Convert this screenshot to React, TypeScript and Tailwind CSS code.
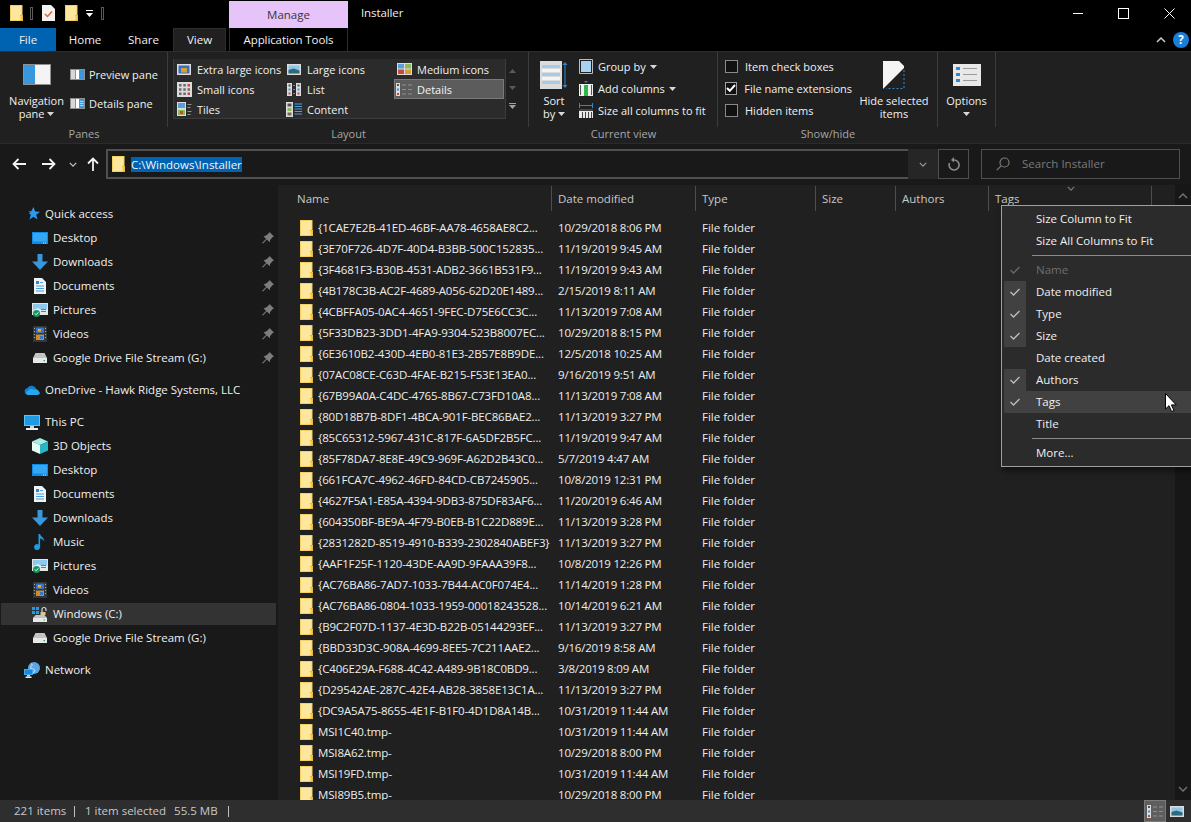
import React from "react";

const files: [string, string][] = [
  ["{1CAE7E2B-41ED-46BF-AA78-4658AE8C2...", "10/29/2018 8:06 PM"],
  ["{3E70F726-4D7F-40D4-B3BB-500C152835...", "11/19/2019 9:45 AM"],
  ["{3F4681F3-B30B-4531-ADB2-3661B531F9...", "11/19/2019 9:43 AM"],
  ["{4B178C3B-AC2F-4689-A056-62D20E1489...", "2/15/2019 8:11 AM"],
  ["{4CBFFA05-0AC4-4651-9FEC-D75E6CC3C...", "11/13/2019 7:08 AM"],
  ["{5F33DB23-3DD1-4FA9-9304-523B8007EC...", "10/29/2018 8:15 PM"],
  ["{6E3610B2-430D-4EB0-81E3-2B57E8B9DE...", "12/5/2018 10:25 AM"],
  ["{07AC08CE-C63D-4FAE-B215-F53E13EA0...", "9/16/2019 9:51 AM"],
  ["{67B99A0A-C4DC-4765-8B67-C73FD10A8...", "11/13/2019 7:08 AM"],
  ["{80D18B7B-8DF1-4BCA-901F-BEC86BAE2...", "11/13/2019 3:27 PM"],
  ["{85C65312-5967-431C-817F-6A5DF2B5FC...", "11/19/2019 9:47 AM"],
  ["{85F78DA7-8E8E-49C9-969F-A62D2B43C0...", "5/7/2019 4:47 AM"],
  ["{661FCA7C-4962-46FD-84CD-CB7245905...", "10/8/2019 12:31 PM"],
  ["{4627F5A1-E85A-4394-9DB3-875DF83AF6...", "11/20/2019 6:46 AM"],
  ["{604350BF-BE9A-4F79-B0EB-B1C22D889E...", "11/13/2019 3:28 PM"],
  ["{2831282D-8519-4910-B339-2302840ABEF3}", "11/13/2019 3:27 PM"],
  ["{AAF1F25F-1120-43DE-AA9D-9FAAA39F8...", "10/8/2019 12:26 PM"],
  ["{AC76BA86-7AD7-1033-7B44-AC0F074E4...", "11/14/2019 1:28 PM"],
  ["{AC76BA86-0804-1033-1959-00018243528...", "10/14/2019 6:21 AM"],
  ["{B9C2F07D-1137-4E3D-B22B-05144293EF...", "11/13/2019 3:27 PM"],
  ["{BBD33D3C-908A-4699-8EE5-7C211AAE2...", "9/16/2019 8:58 AM"],
  ["{C406E29A-F688-4C42-A489-9B18C0BD9...", "3/8/2019 8:09 AM"],
  ["{D29542AE-287C-42E4-AB28-3858E13C1A...", "11/13/2019 3:27 PM"],
  ["{DC9A5A75-8655-4E1F-B1F0-4D1D8A14B...", "10/31/2019 11:44 AM"],
  ["MSI1C40.tmp-", "10/31/2019 11:44 AM"],
  ["MSI8A62.tmp-", "10/29/2018 8:00 PM"],
  ["MSI19FD.tmp-", "10/31/2019 11:44 AM"],
  ["MSI89B5.tmp-", "10/29/2018 8:00 PM"],
];

function Folder({ className = "" }: { className?: string }) {
  return (
    <svg viewBox="0 0 13 16" className={`h-4 w-[13px] shrink-0 ${className}`}>
      <path d="M0 0h12.500v16H0z" fill="#f6cf62" />
      <path d="M1 1h10.500v14H1z" fill="#fde79d" />
      <path d="M10 10h3v6h-3z" fill="#e9b93e" />
      <path d="M10 11h1.500v4H10z" fill="#fcd96f" />
    </svg>
  );
}

function Caret({ className = "" }: { className?: string }) {
  return (
    <svg viewBox="0 0 7 4" className={`inline-block h-1 w-[7px] ${className}`}>
      <path d="M0 0h7L3.500 4z" fill="#d8d8d8" />
    </svg>
  );
}

function Chevron({ up, className = "" }: { up?: boolean; className?: string }) {
  return (
    <svg viewBox="0 0 10 6" className={className} fill="none" stroke="currentColor" strokeWidth="1.500">
      <path d={up ? "M1 5l4-4 4 4" : "M1 1l4 4 4-4"} />
    </svg>
  );
}

function Pin() {
  return (
    <svg viewBox="0 0 12 12" className="h-3 w-3 shrink-0">
      <path d="M7.500 0L12 4.500l-1.300.6-2.600 3-.3 2.200L4.900 7.400 1 11.500 0 11l4-4-2.500-2.900 2.300-.3 3-2.600z" fill="#7d7d7d" />
    </svg>
  );
}

function Desktop() {
  return (
    <svg viewBox="0 0 16 12" className="h-3 w-4 shrink-0">
      <path d="M0 0h16v12H0z" fill="#0f8ae6" />
      <path d="M1 1h14v8.500H1z" fill="#35a7f2" />
      <path d="M11 10.500h1v1h-1zM13 10.500h1v1h-1z" fill="#d8f0ff" />
    </svg>
  );
}

function Downloads() {
  return (
    <svg viewBox="0 0 16 16" className="h-4 w-4 shrink-0">
      <path d="M5.500 0h5v7.500H16L8 16 0 7.500h5.500z" fill="#3a96dd" />
    </svg>
  );
}

function Documents() {
  return (
    <svg viewBox="0 0 12 16" className="h-4 w-3 shrink-0">
      <path d="M0 0h8l4 4v12H0z" fill="#f2f2f2" />
      <path d="M2 3h3v3H2z" fill="#2b88d8" />
      <path d="M6 4h3v1H6zM2 7.500h8v1H2zM2 10h8v1H2zM2 12.500h8v1H2z" fill="#4a9fe0" />
    </svg>
  );
}

function Pictures() {
  return (
    <svg viewBox="0 0 16 16" className="h-4 w-4 shrink-0">
      <path d="M0 1h16v12H0z" fill="#e4e4e4" />
      <path d="M1 2h14v10H1z" fill="#8cc7ef" />
      <path d="M1 8l5-2 4 2 5-1v5H1z" fill="#dfe9ef" />
      <path d="M9 7h5v1H9zM9 9h5v1H9z" fill="#6a7a86" />
      <circle cx="4.500" cy="11.500" r="3.500" fill="#14985f" />
      <path d="M3 11.500l1.200 1.200L6.300 10.400" stroke="#e8fff4" fill="none" />
    </svg>
  );
}

function Videos() {
  return (
    <svg viewBox="0 0 14 16" className="h-4 w-[14px] shrink-0">
      <path d="M0 0h14v16H0z" fill="#33373b" />
      <path d="M3 1.500h8V7H3z" fill="#3c74c4" />
      <path d="M3 8.500h8V14H3z" fill="#d68a24" />
      <path d="M5 3h3v2.500H5z" fill="#e2b32c" />
      <path d="M7 10h3v3H7z" fill="#3c74c4" />
      <path d="M1 2h1v1H1zM1 5h1v1H1zM1 8h1v1H1zM1 11h1v1H1zM12 2h1v1h-1zM12 5h1v1h-1zM12 8h1v1h-1zM12 11h1v1h-1z" fill="#a9adb2" />
    </svg>
  );
}

function Drive() {
  return (
    <svg viewBox="0 0 14 10" className="h-[10px] w-[14px] shrink-0">
      <path d="M2.500 0h9L14 5H0z" fill="#c4c4c4" />
      <path d="M0 5h14v5H0z" fill="#e8e8e8" />
      <path d="M10.500 7h1.500v1.200h-1.500z" fill="#35a853" />
    </svg>
  );
}

function Row({ icon, label, pin, active, top }: { icon: React.ReactNode; label: string; pin?: boolean; active?: boolean; top?: boolean }) {
  return (
    <div className="flex h-6 items-center py-px pl-px pr-[2px]">
      <div className={`flex h-[22px] flex-1 items-center ${top ? "pl-[23px]" : "pl-[31px]"} ${active ? "bg-[#333333]" : ""}`}>
        <div className="mr-[5px] flex w-4 items-center justify-center">{icon}</div>
        <span className="flex-1 whitespace-nowrap">{label}</span>
        {pin && (
          <div className="mr-[2px]">
            <Pin />
          </div>
        )}
      </div>
    </div>
  );
}

function Sidebar() {
  return (
    <div className="w-[278px] shrink-0 bg-[#191919] pt-[17px] text-[#f0f0f0]">
      <Row
        top
        label="Quick access"
        icon={
          <svg viewBox="0 0 16 14" className="h-[14px] w-4">
            <path d="M9.500 0l1.600 4.500 4.900.2-3.800 3 1.300 4.800-4-2.700-4 2.700 1.300-4.800-2-1.600 1.600-.6L4 3.700l3.200.9z" fill="#2b9bf0" />
          </svg>
        }
      />
      <Row pin label="Desktop" icon={<Desktop />} />
      <Row pin label="Downloads" icon={<Downloads />} />
      <Row pin label="Documents" icon={<Documents />} />
      <Row pin label="Pictures" icon={<Pictures />} />
      <Row pin label="Videos" icon={<Videos />} />
      <Row pin label="Google Drive File Stream (G:)" icon={<Drive />} />
      <div className="h-2" />
      <Row
        top
        label="OneDrive - Hawk Ridge Systems, LLC"
        icon={
          <svg viewBox="0 0 16 10" className="h-[10px] w-4">
            <path d="M4 10a3.500 3.500 0 01-.6-6.900A5 5 0 0112.300 4 3.200 3.200 0 0113 10z" fill="#0f7fd8" />
            <path d="M4 10a2.200 2.200 0 01.4-4.300c1-2 3.400-2.400 5-.9C11.500 4 14.500 5 16 8c-.3 1.200-1.500 2-3 2z" fill="#28a8ea" />
          </svg>
        }
      />
      <div className="h-2" />
      <Row
        top
        label="This PC"
        icon={
          <svg viewBox="0 0 16 15" className="h-[15px] w-4">
            <path d="M0 0h16v11H0z" fill="#5cc4f5" />
            <path d="M1 1h14v9H1z" fill="#1f9be6" />
            <path d="M6 11h4v2H6z" fill="#c8d4dc" />
            <path d="M2 13h12v2H2z" fill="#e8eef2" />
          </svg>
        }
      />
      <Row
        label="3D Objects"
        icon={
          <svg viewBox="0 0 16 16" className="h-4 w-4">
            <path d="M8 0l8 3.500L8 7 0 3.500z" fill="#a4eee8" />
            <path d="M0 3.500L8 7v9l-8-3.500z" fill="#e4fbf8" />
            <path d="M16 3.500L8 7v9l8-3.500z" fill="#28b6c4" />
          </svg>
        }
      />
      <Row label="Desktop" icon={<Desktop />} />
      <Row label="Documents" icon={<Documents />} />
      <Row label="Downloads" icon={<Downloads />} />
      <Row
        label="Music"
        icon={
          <svg viewBox="0 0 12 16" className="h-4 w-3">
            <path d="M4.500 0h1.600c.3 2.500 4.400 3.400 4.400 8-.4-1.700-2.300-3.300-4.400-3.500V13a3 3 0 11-1.600-2.600z" fill="#1b9be8" />
          </svg>
        }
      />
      <Row label="Pictures" icon={<Pictures />} />
      <Row label="Videos" icon={<Videos />} />
      <Row
        active
        label="Windows (C:)"
        icon={
          <svg viewBox="0 0 16 16" className="h-4 w-4">
            <path d="M0 1h3v3H0zM4 1h3v3H4zM0 5h3v3H0zM4 5h3v3H4z" fill="#1f9be6" />
            <path d="M10 6V3.500a2 2 0 014 0V5" fill="none" stroke="#d8d8d8" strokeWidth="1.200" />
            <path d="M8.500 6h5v3h-5z" fill="#d8c890" />
            <path d="M3.500 9h9L15 12H1z" fill="#c4c4c4" />
            <path d="M1 12h14v4H1z" fill="#e8e8e8" />
            <path d="M11.500 13.500H13v1h-1.500z" fill="#35a853" />
          </svg>
        }
      />
      <Row label="Google Drive File Stream (G:)" icon={<Drive />} />
      <div className="h-2" />
      <Row
        top
        label="Network"
        icon={
          <svg viewBox="0 0 16 16" className="h-4 w-4">
            <circle cx="10" cy="6" r="6" fill="#5aa6e6" />
            <path d="M7 1.500c2 1 1 3-1 4 1 2 4 1 5 3l-2 3" stroke="#d8ecfa" fill="none" />
            <path d="M0 7h9v6H0z" fill="#38b0f0" />
            <path d="M1 8h7v4H1z" fill="#1b87d8" />
            <path d="M3 13h3v1.500H3z" fill="#c8d4dc" />
            <path d="M1.500 14.500h6V16h-6z" fill="#e8eef2" />
          </svg>
        }
      />
    </div>
  );
}

function Header({ w, label, first }: { w: string; label: string; first?: boolean }) {
  return (
    <div className={`flex h-[25px] items-center border-r border-[#4d4d4d] text-[#c8c8c8] ${w} ${first ? "pl-[19px]" : "pl-[6px]"}`}>
      {label}
    </div>
  );
}

function FileList() {
  return (
    <div className="relative flex min-w-0 flex-1 bg-[#202020]">
      <div className="min-w-0 flex-1 overflow-hidden">
        <div className="flex pt-px">
          <Header first w="w-[274px]" label="Name" />
          <Header w="w-[144px]" label="Date modified" />
          <Header w="w-[120px]" label="Type" />
          <Header w="w-[80px]" label="Size" />
          <Header w="w-[93px]" label="Authors" />
          <div className="relative">
            <Header w="w-[163px]" label="Tags" />
            <Chevron className="absolute left-[78px] top-[0px] h-[5px] w-2 text-[#7a7a7a]" />
          </div>
        </div>
        <div className="pt-[6px]">
          {files.map(([name, date]) => (
            <div key={name} className="flex h-[21px] items-center whitespace-nowrap text-[#ededed]">
              <div className="flex w-[280px] items-center pl-[22px]">
                <Folder />
                <span className="ml-[5px] tracking-[-0.15px]">{name}</span>
              </div>
              <div className="w-[144px] tracking-[-0.2px]">{date}</div>
              <div>File folder</div>
            </div>
          ))}
        </div>
      </div>
      <div className="flex w-4 shrink-0 flex-col items-center justify-between bg-[#171717] py-[8px] text-[#6e6e6e]">
        <Chevron up className="h-[6px] w-[10px]" />
        <Chevron className="h-[6px] w-[10px]" />
      </div>
    </div>
  );
}

function MenuItem({ label, check, hot, box, dim }: { label: string; check?: boolean; hot?: boolean; box?: boolean; dim?: boolean }) {
  return (
    <div className={`ml-[2px] flex h-[22px] items-center ${hot ? "bg-[#414141]" : ""}`}>
      <div className={`flex h-[22px] w-[22px] items-center justify-center ${box ? "bg-[#414141]" : ""}`}>
        {check && (
          <svg viewBox="0 0 10 8" className="h-2 w-[10px]" fill="none" stroke={dim ? "#6a6a6a" : "#bdbdbd"} strokeWidth="1.300">
            <path d="M.500 4l3 3L9.500 1" />
          </svg>
        )}
      </div>
      <span className={`ml-[10px] ${dim ? "text-[#6e6e6e]" : "text-[#f0f0f0]"}`}>{label}</span>
    </div>
  );
}

function MenuSep() {
  return (
    <div className="flex h-[7px] items-center pl-[30px]">
      <div className="h-px flex-1 bg-[#8a8a8a]" />
    </div>
  );
}

function ColumnMenu() {
  return (
    <div className="absolute left-[1001px] top-[205px] h-[262px] w-[192px] border border-[#a0a0a0] bg-[#2b2b2b] py-[2px] shadow-[2px_4px_6px_rgba(0,0,0,0.5)]">
      <MenuItem label="Size Column to Fit" />
      <MenuItem label="Size All Columns to Fit" />
      <MenuSep />
      <MenuItem dim check label="Name" />
      <MenuItem box check label="Date modified" />
      <MenuItem box check label="Type" />
      <MenuItem box check label="Size" />
      <MenuItem label="Date created" />
      <MenuItem box check label="Authors" />
      <MenuItem hot check label="Tags" />
      <MenuItem label="Title" />
      <MenuSep />
      <MenuItem label="More..." />
    </div>
  );
}

function RibbonGroup({ w, label, children }: { w: string; label: string; children: React.ReactNode }) {
  return (
    <div className={`flex h-full shrink-0 flex-col ${w}`}>
      <div className="flex h-[75px] border-r border-[#3c3c3c]">{children}</div>
      <div className="flex h-[13px] items-center justify-center text-[#a6a6a6]">{label}</div>
    </div>
  );
}

function SmallPaneIcon({ details }: { details?: boolean }) {
  return (
    <svg viewBox="0 0 15 11" className="h-[11px] w-[15px] shrink-0">
      <path d="M0 0h15v11H0z" fill="#8f8f8f" />
      <path d="M1 1h4v9H1z" fill="#d8d8d8" />
      <path d="M6 1h3v9H6z" fill="#ffffff" />
      <path d="M9.500 1H14v9H9.500z" fill="#3a96dd" />
      {details && <path d="M10 3h3.500v.8H10zM10 5h3.500v.8H10zM10 7h3.500v.8H10z" fill="#d8ecfa" />}
    </svg>
  );
}

function LayoutIcon({ kind }: { kind: string }) {
  if (kind === "xl" || kind === "l")
    return (
      <svg viewBox="0 0 14 11" className="h-[11px] w-[14px]">
        <path d="M0 0h14v11H0z" fill="#dcdcdc" />
        <path d="M1.500 1.500h11v8h-11z" fill={kind === "xl" ? "#3a6fc0" : "#8cc7ef"} />
        {kind === "xl" ? <path d="M4 4h6v4.500H4z" fill="#d8a030" /> : <path d="M1.500 6l5-1.500 6 2v3h-11z" fill="#2f6a78" />}
      </svg>
    );
  if (kind === "m")
    return (
      <svg viewBox="0 0 15 12" className="h-3 w-[15px]">
        <path d="M0 0h15v12H0z" fill="#dcdcdc" />
        <path d="M1 1h6v4.500H1z" fill="#5a9fd8" />
        <path d="M8 1h6v4.500H8z" fill="#8cb860" />
        <path d="M1 6.500h6V11H1z" fill="#c84a3a" />
        <path d="M8 6.500h6V11H8z" fill="#d8a030" />
      </svg>
    );
  if (kind === "s")
    return (
      <svg viewBox="0 0 15 15" className="h-[15px] w-[15px]">
        <path d="M0 0h15v15H0z" fill="#dcdcdc" />
        <path d="M2 2h2.500v2.500H2zM6.300 2h2.500v2.500H6.300zM2 6.300h2.500v2.500H2zM6.300 6.300h2.500v2.500H6.300zM2 10.500h2.500V13H2zM6.300 10.500h2.500V13H6.300zM10.500 6.300H13v2.500h-2.500z" fill="#6a6a6a" />
        <path d="M10.500 2H13v2.500h-2.500zM10.500 10.500H13V13h-2.500z" fill="#c84a3a" />
      </svg>
    );
  if (kind === "list")
    return (
      <svg viewBox="0 0 14 13" className="h-[13px] w-[14px]">
        <path d="M0 0h5v13H0zM9 0h5v13H9z" fill="#dcdcdc" />
        <path d="M1.500 1.500h2v2h-2zM10.500 1.500h2v2h-2z" fill="#555" />
        <path d="M1.500 5.500h2v2h-2zM10.500 5.500h2v2h-2z" fill="#3a8ee0" />
        <path d="M1.500 9.500h2v2h-2zM10.500 9.500h2v2h-2z" fill="#c84a3a" />
        <path d="M6 2h2v1H6zM6 6h2v1H6zM6 10h2v1H6z" fill="#8a8a8a" />
      </svg>
    );
  if (kind === "details")
    return (
      <svg viewBox="0 0 16 13" className="h-[13px] w-4">
        <path d="M0 0h4v13H0z" fill="#dcdcdc" />
        <path d="M1 1h2v2H1z" fill="#555" />
        <path d="M1 5.500h2v2H1z" fill="#3a8ee0" />
        <path d="M1 10h2v2H1z" fill="#c84a3a" />
        <path d="M6 1.500h4v1H6zM12 1.500h4v1h-4zM6 6h4v1H6zM12 6h4v1h-4zM6 10.500h4v1H6zM12 10.500h4v1h-4z" fill="#8f8f8f" />
      </svg>
    );
  if (kind === "tiles")
    return (
      <svg viewBox="0 0 15 14" className="h-[14px] w-[15px]">
        <path d="M0 0h9v14H0z" fill="#dcdcdc" />
        <path d="M1 1h7v5H1z" fill="#5a9fd8" />
        <path d="M1 8h7v5H1z" fill="#8cb860" />
        <path d="M3 9h3v3H3z" fill="#c84a3a" />
        <path d="M10.500 2h4v1h-4zM10.500 5h3v1h-3zM10.500 9h4v1h-4zM10.500 12h3v1h-3z" fill="#8f8f8f" />
      </svg>
    );
  return (
    <svg viewBox="0 0 16 15" className="h-[15px] w-4">
      <path d="M0 0h7v15H0z" fill="#dcdcdc" />
      <path d="M1.500 1.500h4v3h-4z" fill="#555" />
      <path d="M1.500 6h4v3h-4z" fill="#8cb860" />
      <path d="M1.500 10.500h4v3h-4z" fill="#7a6a50" />
      <path d="M8.500 1.500H16v1H8.500zM8.500 4H16v1H8.500zM8.500 6.500H16v1H8.500zM8.500 9H16v1H8.500zM8.500 11.500H16v1H8.500z" fill="#4a9fe0" />
    </svg>
  );
}

function LayoutItem({ kind, label, active }: { kind: string; label: string; active?: boolean }) {
  return (
    <div className={`flex h-5 items-center whitespace-nowrap ${active ? "border border-[#7a7a7a] bg-[#5c5c5c] text-[#f5f5f5]" : "border border-transparent"}`}>
      <div className="ml-[1px] flex w-[16px] justify-center">
        <LayoutIcon kind={kind} />
      </div>
      <span className="ml-[5px]">{label}</span>
    </div>
  );
}

function Ribbon() {
  return (
    <div className="flex h-[92px] shrink-0 border-t border-[#2d2d2d] bg-[#202020] text-[11px] text-[#f0f0f0]">
      <RibbonGroup w="w-[168px]" label="Panes">
        <div className="flex w-[70px] flex-col items-center pt-[12px] pl-[3px]">
          <svg viewBox="0 0 28 21" className="h-[21px] w-7">
            <path d="M0 0h28v21H0z" fill="#909090" />
            <path d="M1 1h11v19H1z" fill="#3a96dd" />
            <path d="M12 1h15v19H12z" fill="#f4f4f4" />
          </svg>
          <div className="mt-[9px] text-center leading-[13px]">
            Navigation
            <br />
            pane <Caret className="mb-[2px]" />
          </div>
        </div>
        <div className="pt-[14px]">
          <div className="flex h-[16px] items-center gap-[4px]">
            <SmallPaneIcon />
            <span>Preview pane</span>
          </div>
          <div className="mt-[13px] flex h-[16px] items-center gap-[4px]">
            <SmallPaneIcon details />
            <span>Details pane</span>
          </div>
        </div>
      </RibbonGroup>

      <RibbonGroup w="w-[361px]" label="Layout">
        <div className="ml-[5px] mt-[7px] flex h-[60px]">
          <div className="grid w-[333px] grid-cols-[110px_110px_110px] content-start border border-t-0 border-[#3c3c3c] bg-[#2b2b2b]">
            <LayoutItem kind="xl" label="Extra large icons" />
            <LayoutItem kind="l" label="Large icons" />
            <LayoutItem kind="m" label="Medium icons" />
            <LayoutItem kind="s" label="Small icons" />
            <LayoutItem kind="list" label="List" />
            <LayoutItem active kind="details" label="Details" />
            <LayoutItem kind="tiles" label="Tiles" />
            <LayoutItem kind="content" label="Content" />
          </div>
          <div className="flex w-[13px] flex-col items-center justify-around py-[4px]">
            <svg viewBox="0 0 7 4" className="h-1 w-[7px]"><path d="M3.500 0L7 4H0z" fill="#5a5a5a" /></svg>
            <svg viewBox="0 0 7 4" className="h-1 w-[7px]"><path d="M0 0h7L3.500 4z" fill="#5a5a5a" /></svg>
            <svg viewBox="0 0 7 6" className="h-[6px] w-[7px]"><path d="M0 0h7v1H0zM0 2h7L3.500 6z" fill="#a0a0a0" /></svg>
          </div>
        </div>
      </RibbonGroup>

      <RibbonGroup w="w-[189px]" label="Current view">
        <div className="flex w-[50px] flex-col items-center pt-[9px]">
          <svg viewBox="0 0 28 28" className="h-7 w-7">
            <path d="M0 0h22v28H0z" fill="#dcdcdc" />
            <path d="M2 4h18v3H2zM2 12h18v3H2zM2 20h18v3H2z" fill="#a8cbe4" />
            <path d="M2 8h18v3H2zM2 16h18v3H2z" fill="#f4f4f4" />
            <path d="M25 1l2.500 3h-2v20h2L25 27l-2.500-3h2V4h-2z" fill="#2b88d8" />
          </svg>
          <div className="mt-[5px] text-center leading-[13px]">
            Sort
            <br />
            by <Caret className="mb-[2px]" />
          </div>
        </div>
        <div className="flex flex-col pt-[3px]">
          <div className="flex h-[22px] items-center gap-[5px]">
            <svg viewBox="0 0 14 15" className="h-[15px] w-[14px]">
              <path d="M.500.500h13v14H.500z" fill="none" stroke="#bdbdbd" />
              <path d="M2 2h10v11H2z" fill="#a8d4f4" />
            </svg>
            <span>Group by <Caret className="mb-[2px] ml-[1px]" /></span>
          </div>
          <div className="flex h-[22px] items-center gap-[5px]">
            <svg viewBox="0 0 14 15" className="h-[15px] w-[14px]">
              <path d="M5 0h4L7 2z" fill="#2b88d8" />
              <path d="M0 3h14v12H0z" fill="#f0f0f0" />
              <path d="M5 4h4v11H5z" fill="#2fb84a" />
              <path d="M1 4h1v10H1zM12 4h1v10h-1z" fill="#555" />
            </svg>
            <span>Add columns <Caret className="mb-[2px] ml-[1px]" /></span>
          </div>
          <div className="flex h-[22px] items-center gap-[5px]">
            <svg viewBox="0 0 14 15" className="h-[15px] w-[14px]">
              <path d="M0 0h1v5H0zM13 0h1v5h-1zM1 2h12v1H1z" fill="#2b88d8" />
              <path d="M0 6h14v9H0z" fill="#e8e8e8" />
              <path d="M0 6h14v2H0zM3 9h1v6H3zM6 9h1v6H6zM9 9h1v6H9zM12 9h1v6h-1z" fill="#444" />
            </svg>
            <span className="whitespace-nowrap">Size all columns to fit</span>
          </div>
        </div>
      </RibbonGroup>

      <RibbonGroup w="w-[220px]" label="Show/hide">
        <div className="flex w-[134px] flex-col pl-[7px] pt-[3px]">
          {[
            ["Item check boxes", false],
            ["File name extensions", true],
            ["Hidden items", false],
          ].map(([label, on]) => (
            <div key={String(label)} className="flex h-[22px] items-center whitespace-nowrap">
              <div className={`flex h-[13px] w-[13px] items-center justify-center border ${on ? "border-[#a0a0a0]" : "border-[#8a8a8a]"} bg-[#111111]`}>
                {on && (
                  <svg viewBox="0 0 10 8" className="h-2 w-[10px]" fill="none" stroke="#ffffff" strokeWidth="2">
                    <path d="M1 4l2.800 2.800L9 1" />
                  </svg>
                )}
              </div>
              <span className="ml-[7px]">{label}</span>
            </div>
          ))}
        </div>
        <div className="flex w-[84px] flex-col items-center pt-[9px]">
          <svg viewBox="0 0 22 28" className="h-7 w-[22px]">
            <path d="M0 0h16l5 5v2L0 28z" fill="#f4f4f4" />
            <path d="M21 9v18.500H3" fill="none" stroke="#2b88d8" strokeDasharray="2 2" />
          </svg>
          <div className="mt-[5px] whitespace-nowrap text-center leading-[13px]">
            Hide selected
            <br />
            items
          </div>
        </div>
      </RibbonGroup>

      <RibbonGroup w="w-[58px]" label="">
        <div className="flex w-full flex-col items-center pt-[12px]">
          <svg viewBox="0 0 28 22" className="h-[22px] w-7">
            <path d="M0 0h28v22H0z" fill="#e8e8e8" />
            <path d="M3 3h4v3H3zM3 9h4v3H3zM3 15h4v3H3z" fill="#2b88d8" />
            <path d="M10 4h14v1H10zM10 10h14v1H10zM10 16h14v1H10z" fill="#9a9a9a" />
          </svg>
          <div className="mt-[8px] leading-[13px]">Options</div>
          <Caret className="mt-[5px]" />
        </div>
      </RibbonGroup>
    </div>
  );
}

function AddressRow() {
  return (
    <div className="flex h-[42px] shrink-0 items-start border-t border-[#2b2b2b] bg-[#191919] pt-[5px] text-[#f0f0f0]">
      <div className="flex h-[30px] w-[106px] items-center pl-[12px]">
        <svg viewBox="0 0 14 12" className="h-3 w-[14px]" fill="none" stroke="#f2f2f2" strokeWidth="1.800">
          <path d="M14 6H2M6.500 1L1.500 6l5 5" />
        </svg>
        <svg viewBox="0 0 14 12" className="ml-[16px] h-3 w-[14px]" fill="none" stroke="#f2f2f2" strokeWidth="1.800">
          <path d="M0 6h12M7.500 1l5 5-5 5" />
        </svg>
        <Chevron className="ml-[13px] h-[5px] w-2 text-[#c8c8c8]" />
        <svg viewBox="0 0 12 14" className="ml-[10px] h-[14px] w-3" fill="none" stroke="#f2f2f2" strokeWidth="1.800">
          <path d="M6 14V2M1 6.500l5-5 5 5" />
        </svg>
      </div>
      <div className="flex h-[30px] w-[802px] items-center border-y-2 border-l-2 border-[#4f4f4f] pl-[4px]">
        <Folder />
        <span className="ml-[6px] bg-[#0063b1] leading-[15px] text-[#f5f5f5]">C:\Windows\Installer</span>
      </div>
      <div className="flex h-[30px] w-[30px] items-center justify-center bg-[#262626]">
        <Chevron className="h-[5px] w-2 text-[#9a9a9a]" />
      </div>
      <div className="flex h-[30px] w-[31px] items-center justify-center border border-[#4f4f4f] text-[#8a8a8a]">
        <svg viewBox="0 0 12 14" className="h-[14px] w-3" fill="none" stroke="currentColor" strokeWidth="1.600">
          <path d="M6 3a5 5 0 11-4.500 3" />
          <path d="M6 0v5.500L3 3z" fill="currentColor" stroke="none" />
        </svg>
      </div>
      <div className="ml-[12px] flex h-[30px] w-[199px] items-center border border-[#4f4f4f] pl-[14px] text-[#7a7a7a]">
        <svg viewBox="0 0 14 14" className="h-[14px] w-[14px]" fill="none" stroke="#7a7a7a" strokeWidth="1.200">
          <circle cx="8.500" cy="5.500" r="4.500" />
          <path d="M5.200 8.800L.800 13.200" />
        </svg>
        <span className="ml-[12px]">Search Installer</span>
      </div>
    </div>
  );
}

export default function App() {
  return (
    <div className="relative flex h-[822px] w-[1191px] flex-col overflow-hidden bg-black font-['Open_Sans',sans-serif] text-[11.5px] leading-none">
      {/* title bar */}
      <div className="flex h-[28px] shrink-0 items-start text-[#f0f0f0]">
        <div className="flex w-[229px] items-center pl-[10px] pt-[5px]">
          <Folder />
          <div className="ml-[7px] h-[13px] w-[3px] border border-[#5a5a5a]" />
          <svg viewBox="0 0 13 16" className="ml-[9px] h-4 w-[13px]">
            <path d="M0 0h9l4 4v12H0z" fill="#f2f2f2" />
            <path d="M3 9l2.500 2.500L10 6.500" fill="none" stroke="#e8622a" strokeWidth="1.500" />
          </svg>
          <Folder className="ml-[10px]" />
          <svg viewBox="0 0 7 7" className="ml-[8px] h-[7px] w-[7px]">
            <path d="M0 0h7v1H0zM0 3h7L3.500 7z" fill="#ffffff" />
          </svg>
          <div className="ml-[8px] h-[13px] w-[3px] border border-[#5a5a5a]" />
        </div>
        <div className="mt-px flex h-[27px] w-[119px] items-center justify-center bg-[#e6c4f9] text-[#3a3340]">Manage</div>
        <div className="ml-[13px] flex h-[26px] items-center tracking-[-0.1px]">Installer</div>
        <div className="flex-1" />
        <div className="flex h-[26px] items-center">
          <div className="flex w-[46px] justify-center">
            <div className="h-px w-[10px] bg-white" />
          </div>
          <div className="flex w-[46px] justify-center pr-[1px]">
            <div className="h-[11px] w-[11px] border border-white" />
          </div>
          <div className="flex w-[44px] justify-center">
            <svg viewBox="0 0 11 11" className="h-[11px] w-[11px]" stroke="#ffffff">
              <path d="M.500.500l10 10M10.500.500l-10 10" />
            </svg>
          </div>
        </div>
      </div>

      {/* tabs */}
      <div className="flex h-[23px] shrink-0 items-stretch text-[#f0f0f0]">
        <div className="flex w-[56px] items-center justify-center bg-[#0063b1]">File</div>
        <div className="flex w-[58px] items-center justify-center">Home</div>
        <div className="flex w-[59px] items-center justify-center">Share</div>
        <div className="flex w-[53px] items-center justify-center border-x border-t border-[#2d2d2d] bg-[#202020]">View</div>
        <div className="ml-[3px] flex w-[119px] items-center justify-center border-x border-[#2d2d2d] tracking-[-0.1px]">Application Tools</div>
        <div className="flex flex-1 items-center justify-end gap-[7px] pr-[2px]">
          <Chevron up className="h-[6px] w-[10px] text-[#c8c8c8]" />
          <div className="flex h-4 w-4 items-center justify-center rounded-full bg-[#1a7fd8] font-bold text-white">?</div>
        </div>
      </div>

      <Ribbon />
      <AddressRow />

      <div className="flex min-h-0 flex-1">
        <Sidebar />
        <FileList />
      </div>

      {/* status bar */}
      <div className="flex h-[22px] shrink-0 items-center bg-[#2e2e2e] pl-[14px] text-[#c8c8c8]">
        <span className="w-[60px]">221 items</span>
        <div className="h-[11px] w-px bg-[#c0c0c0]" />
        <span className="ml-[10px]">1 item selected</span>
        <span className="ml-[8px]">55.5 MB</span>
        <div className="ml-[10px] h-[11px] w-px bg-[#c0c0c0]" />
        <div className="flex-1" />
        <div className="flex h-[22px] w-[22px] items-center justify-center border border-[#7a7a7a] bg-[#5e5e5e]">
          <svg viewBox="0 0 16 13" className="h-[13px] w-4">
            <path d="M0 0h4v13H0z" fill="#dcdcdc" />
            <path d="M1 1h2v2H1z" fill="#555" />
            <path d="M1 5.500h2v2H1z" fill="#3a8ee0" />
            <path d="M1 10h2v2H1z" fill="#c84a3a" />
            <path d="M6 1.500h4v1H6zM12 1.500h4v1h-4zM6 6h4v1H6zM12 6h4v1h-4zM6 10.500h4v1H6zM12 10.500h4v1h-4z" fill="#8f8f8f" />
          </svg>
        </div>
        <div className="ml-[4px] mr-[7px]">
          <svg viewBox="0 0 14 11" className="h-[11px] w-[14px]">
            <path d="M0 0h14v11H0z" fill="#dcdcdc" />
            <path d="M1.500 1.500h11v8h-11z" fill="#8cc7ef" />
            <path d="M1.500 6l5-1.500 6 2v3h-11z" fill="#2f6a78" />
          </svg>
        </div>
      </div>

      <ColumnMenu />

      {/* mouse pointer */}
      <svg viewBox="0 0 12 19" className="absolute left-[1165px] top-[393px] h-[19px] w-3">
        <path d="M.500.500v15.500l3.500-3.300 2.600 5.800 2.400-1-2.600-5.600h4.800z" fill="#ffffff" stroke="#000000" />
      </svg>
    </div>
  );
}
